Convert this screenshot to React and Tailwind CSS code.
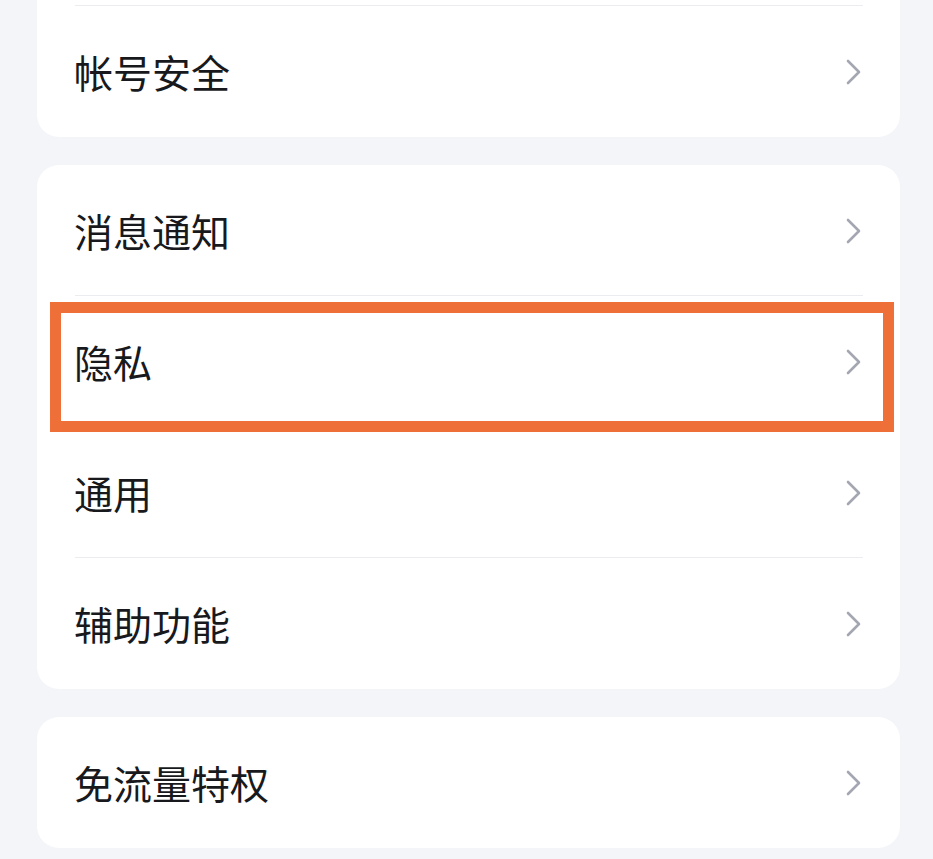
const groups = [
  { items: ['', '帐号安全'], lead: true },
  { items: ['消息通知', '隐私', '通用', '辅助功能'], mark: 1 },
  { items: ['免流量特权'] },
];

function Chevron() {
  return (
    <svg width="15" height="26" viewBox="0 0 15 26" fill="none">
      <polyline
        points="2,2 13,13 2,24"
        stroke="#a4a7b1"
        strokeWidth="2.6"
        strokeLinecap="round"
        strokeLinejoin="round"
      />
    </svg>
  );
}

function Row({ label, last, marked, blank }) {
  return (
    <div className="relative h-[131px] flex items-center pl-[37px] pr-[39px]">
      {!blank && (
        <>
          <span className="flex-1 text-[39px] leading-none text-[#18191c]">{label}</span>
          <Chevron />
        </>
      )}
      {!last && (
        <div className="absolute bottom-0 left-[38px] right-[37px] h-px bg-[#ebecf0]" />
      )}
      {marked && (
        <div className="absolute left-[13px] right-[6px] top-[6px] bottom-[-5px] border-[11px] border-[#ef6f38] pointer-events-none" />
      )}
    </div>
  );
}

export default function App() {
  return (
    <div
      className="min-h-screen bg-[#f4f5f9] pl-[37px] pr-[33px] flex flex-col gap-[28px] overflow-hidden"
      style={{ fontFamily: '"Noto Sans CJK SC", "Noto Sans", sans-serif' }}
    >
      {groups.map((g, gi) => (
        <div
          key={gi}
          className={`bg-white rounded-[22px] ${g.lead ? 'mt-[-125px]' : ''}`}
        >
          {g.items.map((label, i) => (
            <Row
              key={i}
              label={label}
              blank={label === ''}
              last={i === g.items.length - 1}
              marked={g.mark === i}
            />
          ))}
        </div>
      ))}
    </div>
  );
}
